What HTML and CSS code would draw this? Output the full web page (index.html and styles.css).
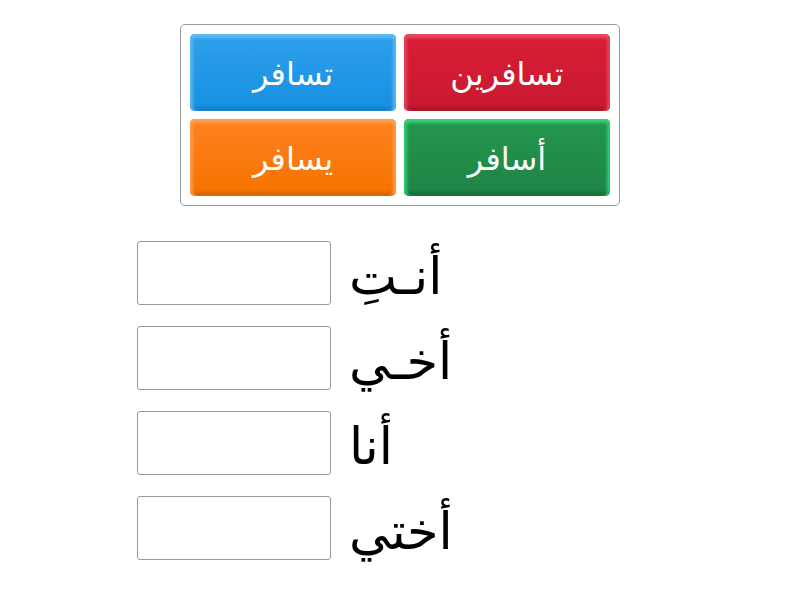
FILE: index.html
```html
<!DOCTYPE html>
<html lang="ar">
<head>
  <meta charset="UTF-8">
  <title>Match up</title>
  <link rel="stylesheet" href="styles.css">
</head>
<body>
  <div class="page">
    <div class="bank">
      <div class="tile blue">تسافر</div>
      <div class="tile red">تسافرين</div>
      <div class="tile orange">يسافر</div>
      <div class="tile green">أسافر</div>
    </div>

    <div class="answers">
      <div class="row"><div class="slot"></div><span class="word">أنـتِ</span></div>
      <div class="row"><div class="slot"></div><span class="word">أخـي</span></div>
      <div class="row"><div class="slot"></div><span class="word">أنا</span></div>
      <div class="row"><div class="slot"></div><span class="word wide">أختي</span></div>
    </div>
  </div>
</body>
</html>
```

FILE: styles.css
```css
body {
  margin: 0;
  background: #fff;
  font-family: "DejaVu Sans", sans-serif;
}

.page {
  width: 800px;
  height: 600px;
  padding-top: 24px;
  box-sizing: border-box;
}

.bank {
  width: 440px;
  margin-left: 180px;
  box-sizing: border-box;
  border: 1px solid #999;
  border-radius: 5px;
  padding: 9px;
  display: grid;
  grid-template-columns: 206px 206px;
  column-gap: 8px;
  row-gap: 8px;
}

.tile {
  height: 77px;
  border-radius: 5px;
  color: #fff;
  font-size: 32px;
  display: flex;
  align-items: center;
  justify-content: center;
  direction: rtl;
  padding-top: 2px;
  box-sizing: border-box;
}

.blue {
  background: linear-gradient(#2f9fea, #1590e2);
  box-shadow: inset 0 6px 3px -2px #5cbaf2, inset 5px 0 3px -2px #56b6f1, inset -5px 0 3px -2px #56b6f1, inset 0 -6px 3px -2px #1a80c8;
}

.red {
  background: linear-gradient(#da1d35, #c71a31);
  box-shadow: inset 0 6px 3px -2px #e5495d, inset 5px 0 3px -2px #e34459, inset -5px 0 3px -2px #e34459, inset 0 -6px 3px -2px #ae162b;
}

.orange {
  background: linear-gradient(#ff8120, #f67300);
  box-shadow: inset 0 6px 3px -2px #ff9e4d, inset 5px 0 3px -2px #ff9845, inset -5px 0 3px -2px #ff9845, inset 0 -6px 3px -2px #d96400;
}

.green {
  background: linear-gradient(#24964f, #1f8446);
  box-shadow: inset 0 6px 3px -2px #33d071, inset 5px 0 3px -2px #2ecb6c, inset -5px 0 3px -2px #2ecb6c, inset 0 -6px 3px -2px #19703b;
}

.answers {
  margin-top: 35px;
  margin-left: 137px;
  display: flex;
  flex-direction: column;
  gap: 21px;
}

.row {
  display: flex;
  align-items: center;
  gap: 18px;
  height: 64px;
}

.slot {
  width: 194px;
  height: 64px;
  box-sizing: border-box;
  border: 1px solid #999;
  border-radius: 3px;
}

.word {
  direction: rtl;
  font-size: 51px;
  line-height: 1;
  color: #000;
  padding-top: 6px;
}

.word.wide {
  letter-spacing: 3px;
}
```
